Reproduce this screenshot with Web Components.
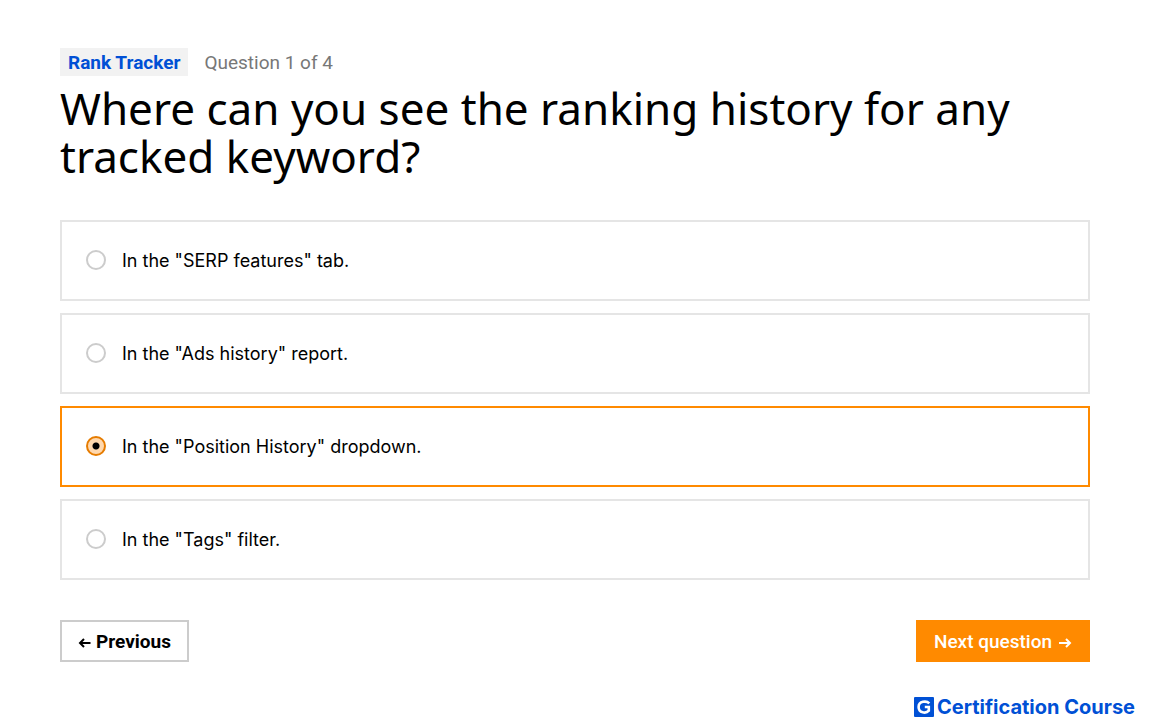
<!DOCTYPE html>
<html lang="en">
<head>
<meta charset="utf-8">
<meta name="viewport" content="width=device-width, initial-scale=1">
<title>Rank Tracker quiz</title>
<style>
  body { margin: 0; background: #fff; color: #000; font-family: Inter, "Liberation Sans", sans-serif; --display: "Noto Sans", sans-serif; --accent: #ff8a00; --blue: #0050d5; }
</style>
</head>
<body>
<quiz-page>
  <quiz-header topic="Rank Tracker" progress="Question 1 of 4">Where can you see the ranking history for any tracked keyword?</quiz-header>
  <quiz-options>
    <template>
      <span>In the "SERP features" tab.</span>
      <span>In the "Ads history" report.</span>
      <span data-selected>In the "Position History" dropdown.</span>
      <span>In the "Tags" filter.</span>
    </template>
  </quiz-options>
  <quiz-nav slot="nav"></quiz-nav>
  <course-brand slot="brand">Certification Course</course-brand>
</quiz-page>

<script>
class QuizPage extends HTMLElement {
  constructor() {
    super();
    this.attachShadow({ mode: "open" }).innerHTML = `
      <style>
        :host { display: block; }
        main { padding: 48px 60px 0; }
        footer { display: flex; justify-content: flex-end; padding: 34px 15px 8px; }
      </style>
      <main><slot></slot><slot name="nav"></slot></main>
      <footer><slot name="brand"></slot></footer>`;
  }
}

class QuizHeader extends HTMLElement {
  constructor() {
    super();
    this.attachShadow({ mode: "open" }).innerHTML = `
      <style>
        :host { display: block; }
        .meta { display: flex; align-items: center; gap: 16px; font-family: Roboto, sans-serif; font-size: 19px; line-height: 26px; }
        .topic { padding: 2px 8px 0; background: #f2f2f2; color: var(--blue); font-weight: 700; }
        .progress { padding-top: 2px; color: #777; }
        h1 { margin: 8px 0 0; font-family: var(--display); font-size: 44px; line-height: 48px; font-weight: 400; }
      </style>
      <div class="meta"><span class="topic"></span><span class="progress"></span></div>
      <h1><slot></slot></h1>`;
  }
  connectedCallback() {
    this.shadowRoot.querySelector(".topic").textContent = this.getAttribute("topic");
    this.shadowRoot.querySelector(".progress").textContent = this.getAttribute("progress");
  }
}

class QuizOptions extends HTMLElement {
  constructor() {
    super();
    this.attachShadow({ mode: "open" }).innerHTML = `
      <style>
        :host { display: block; }
        fieldset { display: grid; gap: 12px; margin: 40px 0 0; padding: 0; border: 0; min-width: 0; }
        label { display: flex; align-items: flex-start; gap: 16px; padding: 24px 24px 23px; border: 2px solid #e5e5e5; font-size: 18px; line-height: 30px; cursor: pointer; }
        label:has(input:checked) { border-color: var(--accent); }
        input { appearance: none; flex: none; box-sizing: border-box; width: 20px; height: 20px; margin: 4px 0 0; border: 2px solid #ccc; border-radius: 50%; background: #fff; }
        input:checked { border-color: #e67c00; background: radial-gradient(circle, #000 3px, #ffd8ae 4px); }
      </style>
      <fieldset aria-label="Answers"></fieldset>`;
  }
  connectedCallback() {
    const set = this.shadowRoot.querySelector("fieldset");
    this.querySelector("template").content.querySelectorAll("span").forEach((item, i) => {
      const label = document.createElement("label");
      const input = document.createElement("input");
      input.type = "radio";
      input.name = "answer";
      input.id = "answer-" + i;
      label.htmlFor = input.id;
      input.checked = "selected" in item.dataset;
      label.append(input, item.cloneNode(true));
      set.append(label);
    });
  }
}

class QuizNav extends HTMLElement {
  constructor() {
    super();
    this.attachShadow({ mode: "open" }).innerHTML = `
      <style>
        :host { display: flex; justify-content: space-between; margin-top: 40px; }
        button { display: flex; align-items: center; justify-content: center; gap: 4px; margin: 0; padding: 8px 16px 6px; border: 2px solid #ccc; background: #fff; color: #000; font: 700 19px/24px Roboto, sans-serif; cursor: pointer; }
        .next { border-color: var(--accent); background: var(--accent); color: #fff; font-weight: 500; gap: 6px; }
        svg { width: 14px; height: 14px; fill: none; stroke: currentColor; stroke-width: 2; }
      </style>
      <button type="button"><svg viewBox="0 0 14 14" aria-hidden="true"><path d="M12.5 8H2M6 4L2 8l4 4"/></svg>Previous</button>
      <button type="button" class="next">Next question<svg viewBox="0 0 14 14" aria-hidden="true"><path d="M1 8h11M8 4l4 4-4 4"/></svg></button>`;
  }
}

class CourseBrand extends HTMLElement {
  constructor() {
    super();
    this.attachShadow({ mode: "open" }).innerHTML = `
      <style>
        :host { display: flex; align-items: center; gap: 3px; color: var(--blue); font-size: 20px; line-height: 22px; font-weight: 700; }
        svg { width: 20px; height: 20px; }
      </style>
      <svg viewBox="0 0 20 20" aria-hidden="true"><rect width="20" height="20" rx="1" fill="#0050d5"/><path d="M15.3 6.4C12.6 3.5 4.6 3.9 4.6 10s7.4 6.9 10.2 3.7V10h-4" fill="none" stroke="#fff" stroke-width="2.6"/></svg>
      <slot></slot>`;
  }
}

customElements.define("quiz-page", QuizPage);
customElements.define("quiz-header", QuizHeader);
customElements.define("quiz-options", QuizOptions);
customElements.define("quiz-nav", QuizNav);
customElements.define("course-brand", CourseBrand);
</script>
</body>
</html>
